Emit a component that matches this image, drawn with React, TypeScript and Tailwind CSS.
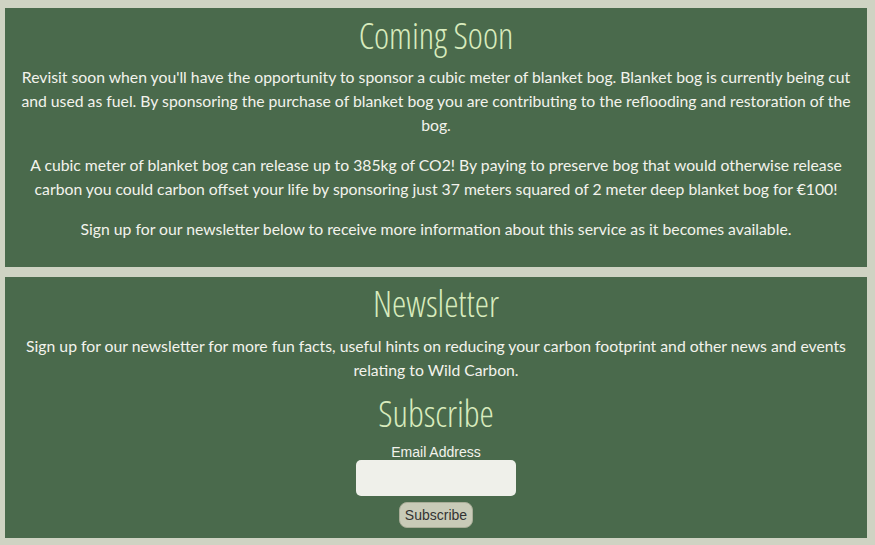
export default function App() {
  const heading = 'text-[36px] leading-[40px] text-[#d8ebbd] font-light';
  const headingFont = { fontFamily: '"Open Sans", sans-serif', fontStretch: '75%' } as const;
  return (
    <div className="min-h-[545px] bg-[#cfd3c3] pl-[5px] pr-[8px] pt-[8px] pb-[7px] font-['Lato',sans-serif] text-[15.75px] leading-[24px] text-[#f3f3ec]">
      <section className="bg-[#4a6a4c] px-3 pt-[8px] pb-[26px] text-center">
        <h2 className={heading} style={headingFont}>Coming Soon</h2>
        <p className="mt-[9px]">
          Revisit soon when you'll have the opportunity to sponsor a cubic meter of blanket bog. Blanket bog is currently being cut and used as fuel. By sponsoring the purchase of blanket bog you are contributing to the reflooding and restoration of the bog.
        </p>
        <p className="mt-4">
          A cubic meter of blanket bog can release up to 385kg of CO2! By paying to preserve bog that would otherwise release carbon you could carbon offset your life by sponsoring just 37 meters squared of 2 meter deep blanket bog for €100!
        </p>
        <p className="mt-4">
          Sign up for our newsletter below to receive more information about this service as it becomes available.
        </p>
      </section>
      <section className="mt-[10px] bg-[#4a6a4c] px-3 pt-[7px] pb-[10px] text-center">
        <h2 className={heading} style={headingFont}>Newsletter</h2>
        <p className="mt-[10px]">
          Sign up for our newsletter for more fun facts, useful hints on reducing your carbon footprint and other news and events relating to Wild Carbon.
        </p>
        <h2 className={`${heading} mt-[12px]`} style={headingFont}>Subscribe</h2>
        <form className="mt-[10px] flex flex-col items-center font-['Liberation_Sans',Arial,sans-serif] text-[14px] leading-[16px]">
          <label htmlFor="email" className="text-[#f3f3ec]">Email Address</label>
          <input id="email" type="email" className="h-[36px] w-[160px] rounded-[5px] bg-[#eff0ea] outline-none" />
          <button type="button" className="mt-[6px] h-[26px] rounded-[8px] border border-[#a9ad98] bg-[#c9cbb8] px-[5px] text-[#333]">
            Subscribe
          </button>
        </form>
      </section>
    </div>
  );
}
